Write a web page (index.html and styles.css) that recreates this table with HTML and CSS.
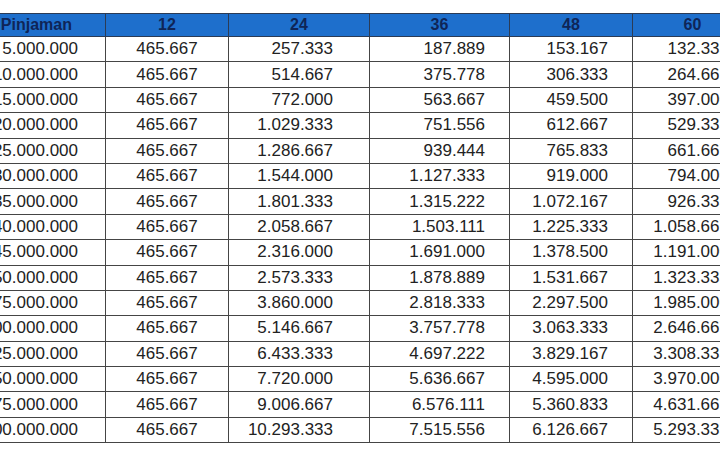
FILE: index.html
```html
<!DOCTYPE html>
<html lang="id">
<head>
<meta charset="utf-8">
<title>Tabel Angsuran</title>
<link rel="stylesheet" href="styles.css">
</head>
<body>
<div class="frame">
<table class="tbl">
<colgroup>
<col class="c1"><col class="c2"><col class="c3"><col class="c4"><col class="c5"><col class="c6">
</colgroup>
<thead>
<tr><th class="h1">Jumlah Pinjaman</th><th>12</th><th>24</th><th>36</th><th>48</th><th>60</th></tr>
</thead>
<tbody>
<tr><td class="a">5.000.000</td><td class="m">465.667</td><td class="b">257.333</td><td class="c">187.889</td><td class="d">153.167</td><td class="e">132.333</td></tr>
<tr><td class="a">10.000.000</td><td class="m">465.667</td><td class="b">514.667</td><td class="c">375.778</td><td class="d">306.333</td><td class="e">264.667</td></tr>
<tr><td class="a">15.000.000</td><td class="m">465.667</td><td class="b">772.000</td><td class="c">563.667</td><td class="d">459.500</td><td class="e">397.000</td></tr>
<tr><td class="a">20.000.000</td><td class="m">465.667</td><td class="b">1.029.333</td><td class="c">751.556</td><td class="d">612.667</td><td class="e">529.333</td></tr>
<tr><td class="a">25.000.000</td><td class="m">465.667</td><td class="b">1.286.667</td><td class="c">939.444</td><td class="d">765.833</td><td class="e">661.667</td></tr>
<tr><td class="a">30.000.000</td><td class="m">465.667</td><td class="b">1.544.000</td><td class="c">1.127.333</td><td class="d">919.000</td><td class="e">794.000</td></tr>
<tr><td class="a">35.000.000</td><td class="m">465.667</td><td class="b">1.801.333</td><td class="c">1.315.222</td><td class="d">1.072.167</td><td class="e">926.333</td></tr>
<tr><td class="a">40.000.000</td><td class="m">465.667</td><td class="b">2.058.667</td><td class="c">1.503.111</td><td class="d">1.225.333</td><td class="e">1.058.667</td></tr>
<tr><td class="a">45.000.000</td><td class="m">465.667</td><td class="b">2.316.000</td><td class="c">1.691.000</td><td class="d">1.378.500</td><td class="e">1.191.000</td></tr>
<tr><td class="a">50.000.000</td><td class="m">465.667</td><td class="b">2.573.333</td><td class="c">1.878.889</td><td class="d">1.531.667</td><td class="e">1.323.333</td></tr>
<tr><td class="a">75.000.000</td><td class="m">465.667</td><td class="b">3.860.000</td><td class="c">2.818.333</td><td class="d">2.297.500</td><td class="e">1.985.000</td></tr>
<tr><td class="a">100.000.000</td><td class="m">465.667</td><td class="b">5.146.667</td><td class="c">3.757.778</td><td class="d">3.063.333</td><td class="e">2.646.667</td></tr>
<tr><td class="a">125.000.000</td><td class="m">465.667</td><td class="b">6.433.333</td><td class="c">4.697.222</td><td class="d">3.829.167</td><td class="e">3.308.333</td></tr>
<tr><td class="a">150.000.000</td><td class="m">465.667</td><td class="b">7.720.000</td><td class="c">5.636.667</td><td class="d">4.595.000</td><td class="e">3.970.000</td></tr>
<tr><td class="a">175.000.000</td><td class="m">465.667</td><td class="b">9.006.667</td><td class="c">6.576.111</td><td class="d">5.360.833</td><td class="e">4.631.667</td></tr>
<tr><td class="a">200.000.000</td><td class="m">465.667</td><td class="b">10.293.333</td><td class="c">7.515.556</td><td class="d">6.126.667</td><td class="e">5.293.333</td></tr>
</tbody>
</table>
</div>
</body>
</html>
```
FILE: styles.css
```css
html, body {
  margin: 0;
  padding: 0;
  background: #ffffff;
}
body {
  width: 720px;
  height: 450px;
  overflow: hidden;
  font-family: "Liberation Sans", Arial, sans-serif;
}
.frame {
  padding-top: 13px;
  margin-left: -91px;
}
.tbl {
  border-collapse: collapse;
  table-layout: fixed;
  width: 843px;
  font-size: 17px;
  color: #222222;
}
.c1 { width: 196px; }
.c2 { width: 123px; }
.c3 { width: 141px; }
.c4 { width: 140px; }
.c5 { width: 123px; }
.c6 { width: 120px; }
.tbl th {
  background: #1e6fcc;
  color: #0f2557;
  font-weight: bold;
  font-size: 16px;
  height: 22px;
  padding: 0;
  text-align: center;
  border: 1px solid #2b3b55;
  line-height: 22px;
}
.tbl th.h1 {
  text-align: right;
  padding-right: 33px;
}
.tbl td {
  height: 24.4px;
  padding: 0;
  border: 1px solid #454545;
  line-height: 24px;
  white-space: nowrap;
}
.tbl td.a { text-align: right; padding-right: 27px; }
.tbl td.m { text-align: center; }
.tbl td.b { text-align: right; padding-right: 36px; }
.tbl td.c { text-align: right; padding-right: 24px; }
.tbl td.d { text-align: right; padding-right: 24px; }
.tbl td.e { text-align: right; padding-right: 23px; }
```
